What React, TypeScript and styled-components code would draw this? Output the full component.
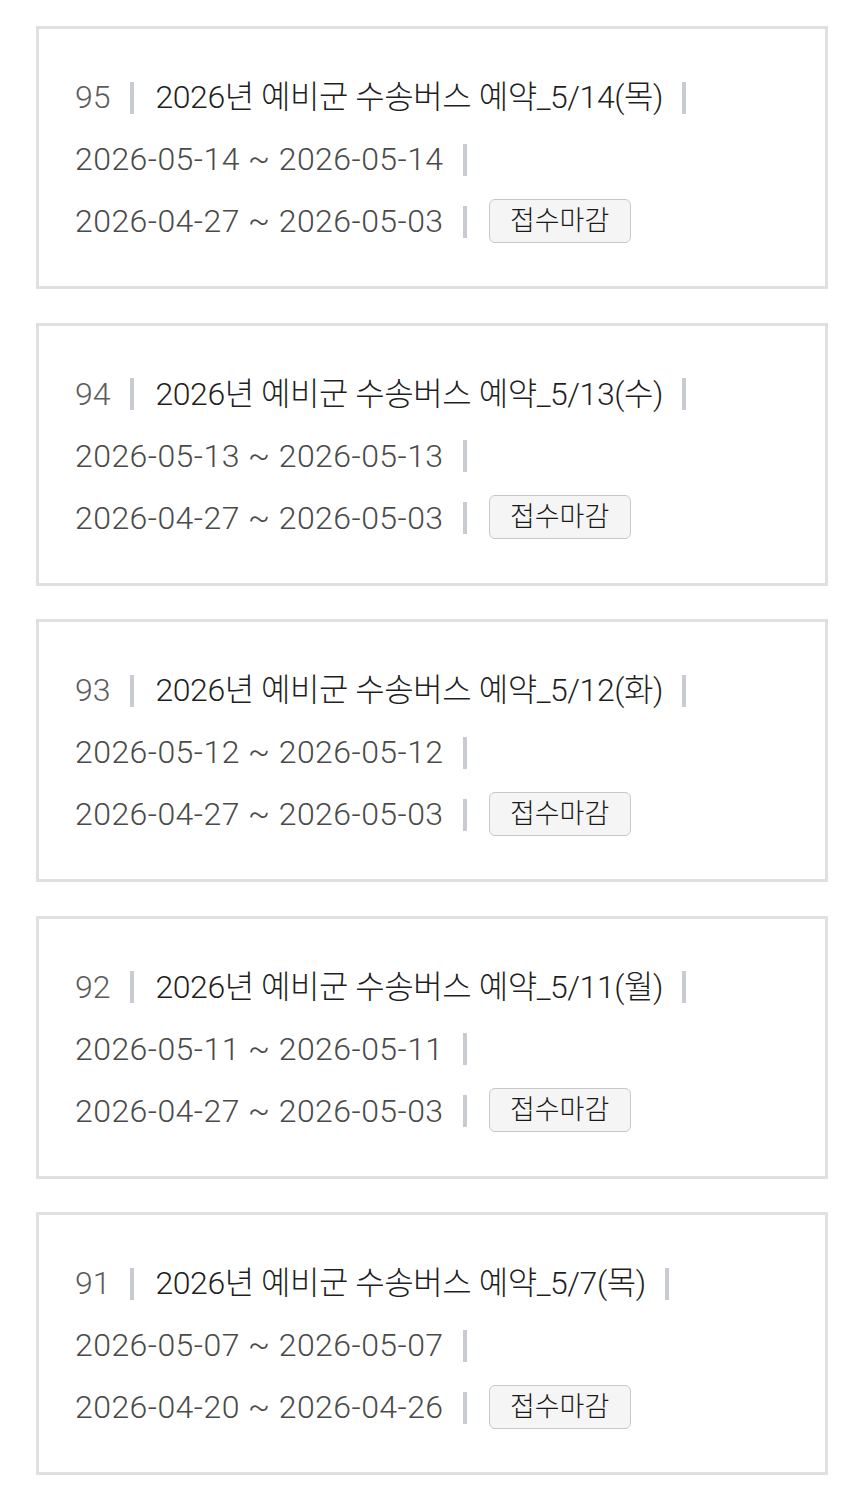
import React from 'react';
import styled, { createGlobalStyle } from 'styled-components';

interface Reservation {
    no: number,
    title: string,
    useDate: string,
    applyDate: string,
    status: string
};

const items: Reservation[] = [
    { no: 95, title: '2026년 예비군 수송버스 예약_5/14(목)', useDate: '2026-05-14 ~ 2026-05-14', applyDate: '2026-04-27 ~ 2026-05-03', status: '접수마감' },
    { no: 94, title: '2026년 예비군 수송버스 예약_5/13(수)', useDate: '2026-05-13 ~ 2026-05-13', applyDate: '2026-04-27 ~ 2026-05-03', status: '접수마감' },
    { no: 93, title: '2026년 예비군 수송버스 예약_5/12(화)', useDate: '2026-05-12 ~ 2026-05-12', applyDate: '2026-04-27 ~ 2026-05-03', status: '접수마감' },
    { no: 92, title: '2026년 예비군 수송버스 예약_5/11(월)', useDate: '2026-05-11 ~ 2026-05-11', applyDate: '2026-04-27 ~ 2026-05-03', status: '접수마감' },
    { no: 91, title: '2026년 예비군 수송버스 예약_5/7(목)', useDate: '2026-05-07 ~ 2026-05-07', applyDate: '2026-04-20 ~ 2026-04-26', status: '접수마감' },
];

const GlobalStyle = createGlobalStyle`
    body {
        margin: 0;
        background-color: #FFFFFF;
        font-family: Roboto, "Noto Sans CJK KR", sans-serif;
    }
`

const List = styled.ul`
    list-style: none;
    margin: 0;
    padding: 26px 36px 0px 36px;
    display: flex;
    flex-direction: column;
    gap: 33.5px;
`

const Card = styled.li`
    border: 3px solid #E0E0E0;
    padding: 46px 36px 43px 36px;
    display: flex;
    flex-direction: column;
    gap: 18px;
`

const Row = styled.div`
    height: 44px;
    line-height: 44px;
    font-size: 32px;
    font-weight: 300;
    letter-spacing: 0.45px;
    color: #4A4A4A;
    white-space: nowrap;
`

const Num = styled.span`
    color: #5C5C5C;
    letter-spacing: 0px;
`

const Title = styled.span`
    color: #1F1F1F;
    letter-spacing: -0.45px;
`

const Bar = styled.i`
    display: inline-block;
    vertical-align: middle;
    width: 4px;
    height: 32px;
    margin: -4px 22px 0px 19px;
    background-color: #C9CBD3;
`

const Status = styled.span`
    display: inline-flex;
    vertical-align: middle;
    align-items: center;
    justify-content: center;
    box-sizing: border-box;
    width: 142px;
    height: 44px;
    margin-top: -6px;
    border: 1px solid #C8C8C8;
    border-radius: 6px;
    background-color: #F5F5F5;
    color: #1A1A1A;
    font-size: 27px;
    letter-spacing: 0px;
`

const App = () => {
    return(
        <>
            <GlobalStyle/>
            <List>
                {items.map(item => (
                    <Card key={item.no}>
                        <Row>
                            <Num>{item.no}</Num>
                            <Bar/>
                            <Title>{item.title}</Title>
                            <Bar/>
                        </Row>
                        <Row>
                            {item.useDate}
                            <Bar/>
                        </Row>
                        <Row>
                            {item.applyDate}
                            <Bar/>
                            <Status>{item.status}</Status>
                        </Row>
                    </Card>
                ))}
            </List>
        </>
    )
}

export default App;
